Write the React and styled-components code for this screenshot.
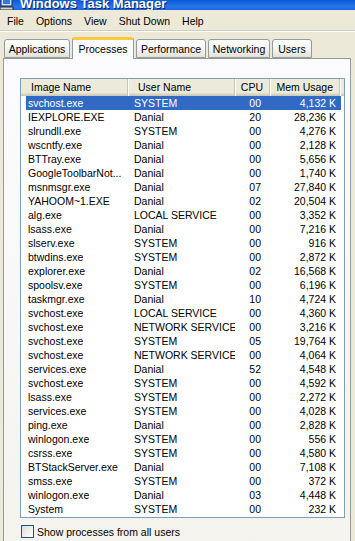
import styled, { createGlobalStyle } from "styled-components"

const processes = [
    ["svchost.exe", "SYSTEM", "00", "4,132 K"],
    ["IEXPLORE.EXE", "Danial", "20", "28,236 K"],
    ["slrundll.exe", "SYSTEM", "00", "4,276 K"],
    ["wscntfy.exe", "Danial", "00", "2,128 K"],
    ["BTTray.exe", "Danial", "00", "5,656 K"],
    ["GoogleToolbarNot...", "Danial", "00", "1,740 K"],
    ["msnmsgr.exe", "Danial", "07", "27,840 K"],
    ["YAHOOM~1.EXE", "Danial", "02", "20,504 K"],
    ["alg.exe", "LOCAL SERVICE", "00", "3,352 K"],
    ["lsass.exe", "Danial", "00", "7,216 K"],
    ["slserv.exe", "SYSTEM", "00", "916 K"],
    ["btwdins.exe", "SYSTEM", "00", "2,872 K"],
    ["explorer.exe", "Danial", "02", "16,568 K"],
    ["spoolsv.exe", "SYSTEM", "00", "6,196 K"],
    ["taskmgr.exe", "Danial", "10", "4,724 K"],
    ["svchost.exe", "LOCAL SERVICE", "00", "4,360 K"],
    ["svchost.exe", "NETWORK SERVICE", "00", "3,216 K"],
    ["svchost.exe", "SYSTEM", "05", "19,764 K"],
    ["svchost.exe", "NETWORK SERVICE", "00", "4,064 K"],
    ["services.exe", "Danial", "52", "4,548 K"],
    ["svchost.exe", "SYSTEM", "00", "4,592 K"],
    ["lsass.exe", "SYSTEM", "00", "2,272 K"],
    ["services.exe", "SYSTEM", "00", "4,028 K"],
    ["ping.exe", "Danial", "00", "2,828 K"],
    ["winlogon.exe", "SYSTEM", "00", "556 K"],
    ["csrss.exe", "SYSTEM", "00", "4,580 K"],
    ["BTStackServer.exe", "Danial", "00", "7,108 K"],
    ["smss.exe", "SYSTEM", "00", "372 K"],
    ["winlogon.exe", "Danial", "03", "4,448 K"],
    ["System", "SYSTEM", "00", "232 K"],
]

const menus = ["File", "Options", "View", "Shut Down", "Help"]

const tabs = [
    {label: "Applications", width: 66},
    {label: "Processes", width: 62, active: true},
    {label: "Performance", width: 70},
    {label: "Networking", width: 62},
    {label: "Users", width: 40},
]

export default function App(){
    return (
        <Window>
            <GlobalStyle/>
            <TitleBar>
                <svg width="14" height="10" viewBox="0 0 14 10">
                    <rect x="1" y="-4" width="11" height="10" fill="#cfe0f5" stroke="#1d2f55"/>
                    <rect x="3" y="-2" width="7" height="6" fill="#3a78d8"/>
                    <rect x="0" y="7" width="13" height="3" fill="#d8d4c6" stroke="#1d2f55"/>
                </svg>
                <h1>Windows Task Manager</h1>
            </TitleBar>
            <MenuBar>
                {menus.map(m => <MenuItem key={m}>{m}</MenuItem>)}
            </MenuBar>
            <Tabs>
                {tabs.map(t => (
                    <Tab key={t.label} $width={t.width} $active={t.active}>{t.label}</Tab>
                ))}
            </Tabs>
            <Panel>
                <ListView>
                    <Header>
                        <HeaderCell $width={107}>Image Name</HeaderCell>
                        <HeaderCell $width={107}>User Name</HeaderCell>
                        <HeaderCell $width={35} $right>CPU</HeaderCell>
                        <HeaderCell $width={70} $right>Mem Usage</HeaderCell>
                    </Header>
                    <Rows>
                        {processes.map((p, id) => (
                            <Row key={id} $selected={id === 0}>
                                <Cell $width={102} $pad="0 0 0 2px">{p[0]}</Cell>
                                <Cell $width={107} $pad="0 0 0 6px">{p[1]}</Cell>
                                <Cell $width={35} $pad="0 9px 0 0" $right>{p[2]}</Cell>
                                <Cell $width={70} $pad="0 4px 0 0" $right>{p[3]}</Cell>
                            </Row>
                        ))}
                    </Rows>
                </ListView>
                <CheckRow>
                    <Box/>
                    <span>Show processes from all users</span>
                </CheckRow>
            </Panel>
        </Window>
    )
}

const GlobalStyle = createGlobalStyle`
    body{
        margin: 0;
        background: #ECE9D8;
        font-family: 'Liberation Sans', Arial, sans-serif;
        font-size: 10.5px;
        overflow: hidden;
    }
`
const Window = styled.div`
    width: 355px;
    height: 541px;
    display: flex;
    flex-direction: column;
    background: #ECE9D8;
    overflow: hidden;
`
const TitleBar = styled.div`
    height: 10px;
    flex-shrink: 0;
    display: flex;
    align-items: flex-end;
    gap: 6px;
    overflow: hidden;
    background: linear-gradient(#0A5AD6, #2A76EA 70%, #1E64DA);
    h1{
        margin: 0;
        color: #FFFFFF;
        font-size: 13px;
        font-weight: bold;
        font-family: 'Liberation Sans', Arial, sans-serif;
        line-height: 15px;
        margin-bottom: -1px;
        white-space: nowrap;
        text-shadow: 1px 1px #0A1E6E;
    }
`
const MenuBar = styled.div`
    height: 21px;
    flex-shrink: 0;
    display: flex;
    align-items: center;
    padding-left: 1px;
    border-bottom: 1px solid #FFFFFF;
    box-shadow: 0 -1px 0 #D0CDBE inset;
`
const MenuItem = styled.div`
    padding: 1px 6px 0;
    color: #000000;
`
const Tabs = styled.div`
    height: 22px;
    flex-shrink: 0;
    margin-top: 4px;
    padding-left: 4px;
    display: flex;
    align-items: flex-end;
    gap: 2px;
    position: relative;
    z-index: 1;
`
const Tab = styled.div`
    width: ${p => p.$width}px;
    height: ${p => p.$active ? 22 : 19}px;
    box-sizing: border-box;
    display: flex;
    align-items: center;
    justify-content: center;
    padding-bottom: ${p => p.$active ? 2 : 0}px;
    border: 1px solid #919B9C;
    border-bottom: ${p => p.$active ? "none" : "1px solid #919B9C"};
    border-top: ${p => p.$active ? "3px solid #FFC73C" : "1px solid #919B9C"};
    border-radius: 3px 3px 0 0;
    background: ${p => p.$active ? "#FCFCFE" : "linear-gradient(#FFFFFF, #F3F2EC 60%, #E4E2D8)"};
    margin-bottom: ${p => p.$active ? -1 : 0}px;
    color: #000000;
    white-space: nowrap;
`
const Panel = styled.div`
    flex: 1;
    margin-left: 3px;
    width: 348px;
    box-sizing: border-box;
    border: 1px solid #919B9C;
    border-bottom: none;
    background: linear-gradient(#FCFCFE, #F4F3EE);
    padding: 19px 0 0 16px;
    display: flex;
    flex-direction: column;
`
const ListView = styled.div`
    width: 325px;
    height: 440px;
    box-sizing: border-box;
    border: 1px solid #7F9DB9;
    background: #FFFFFF;
    display: flex;
    flex-direction: column;
`
const Header = styled.div`
    height: 17px;
    flex-shrink: 0;
    display: flex;
    background: linear-gradient(#EBEADB 80%, #E2DECD 85%, #D6D2C2 92%, #CBC7B8);
`
const HeaderCell = styled.div`
    width: ${p => p.$width}px;
    box-sizing: border-box;
    display: flex;
    align-items: center;
    justify-content: ${p => p.$right ? "flex-end" : "flex-start"};
    padding: ${p => p.$right ? "0 6px 2px 0" : "0 0 2px 10px"};
    border-right: 1px solid #C7C5B2;
    box-shadow: 1px 0 0 #FFFFFF;
    background-clip: padding-box;
    color: #000000;
    white-space: nowrap;
`
const Rows = styled.div`
    display: flex;
    flex-direction: column;
    padding-left: 5px;
`
const Row = styled.div`
    height: 14px;
    width: 315px;
    display: flex;
    align-items: center;
    background: ${p => p.$selected ? "#316AC5" : "transparent"};
    color: ${p => p.$selected ? "#FFFFFF" : "#000000"};
`
const Cell = styled.div`
    width: ${p => p.$width}px;
    flex-shrink: 0;
    box-sizing: border-box;
    padding: ${p => p.$pad};
    text-align: ${p => p.$right ? "right" : "left"};
    white-space: nowrap;
    overflow: hidden;
    line-height: 14px;
`
const CheckRow = styled.div`
    display: flex;
    align-items: center;
    gap: 3px;
    margin-top: 7px;
    margin-left: 1px;
    color: #000000;
`
const Box = styled.div`
    width: 13px;
    height: 13px;
    box-sizing: border-box;
    border: 1px solid #1C5180;
    background: linear-gradient(135deg, #DCDBD5, #FFFFFF);
`
